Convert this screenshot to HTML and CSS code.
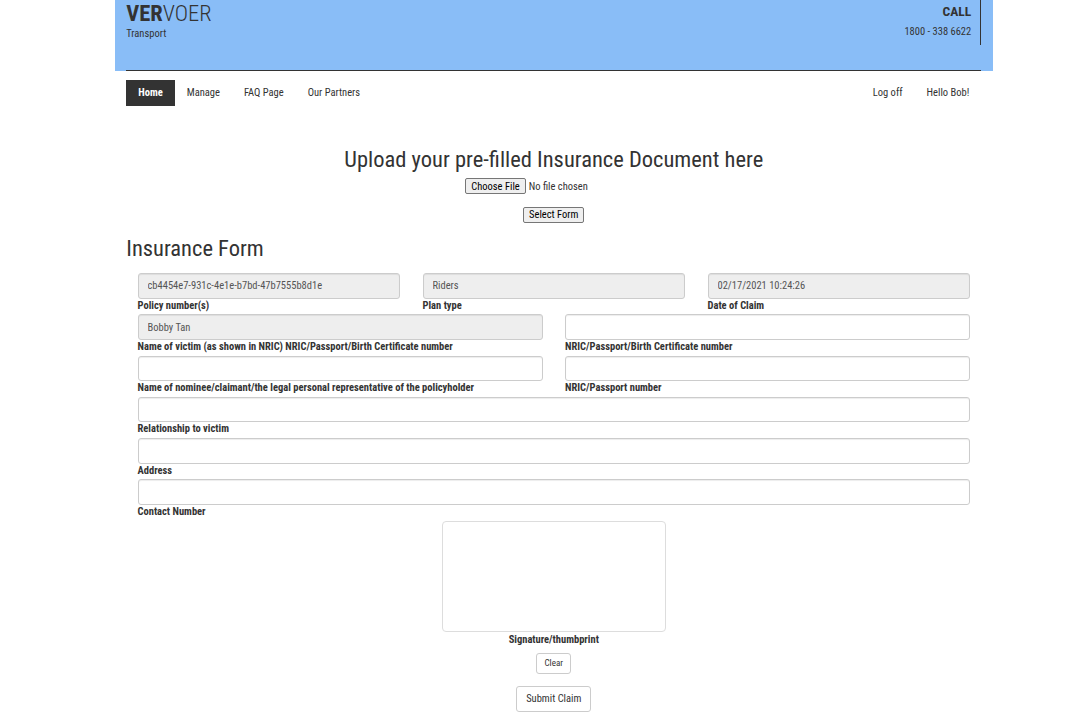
FILE: index.html
```html
<!DOCTYPE html>
<html lang="en">
<head>
<meta charset="utf-8">
<title>VERVOER Transport - Insurance Form</title>
<link rel="stylesheet" href="styles.css">
</head>
<body>
<div class="page">
  <header class="topbar">
    <div class="topbar-inner">
      <div class="brand">
        <div class="brand-name"><span class="brand-bold">VER</span><span class="brand-light">VOER</span></div>
        <div class="brand-sub">Transport</div>
      </div>
      <div class="call">
        <div class="call-title">CALL</div>
        <div class="call-number">1800 - 338 6622</div>
      </div>
    </div>
  </header>

  <nav class="nav">
    <ul class="nav-list">
      <li><a class="nav-link active" href="#">Home</a></li>
      <li><a class="nav-link" href="#">Manage</a></li>
      <li><a class="nav-link" href="#">FAQ Page</a></li>
      <li><a class="nav-link" href="#">Our Partners</a></li>
    </ul>
    <ul class="nav-list">
      <li><a class="nav-link" href="#">Log off</a></li>
      <li><a class="nav-link" href="#">Hello Bob!</a></li>
    </ul>
  </nav>

  <main class="content">
    <section class="upload">
      <h2 class="upload-title">Upload your pre-filled Insurance Document here</h2>
      <div class="upload-file"><input class="file-input" type="file"></div>
      <div class="upload-select"><button class="sys-btn" type="button">Select Form</button></div>
    </section>

    <section class="claim">
      <h2 class="claim-title">Insurance Form</h2>
      <div class="fields">
        <div class="row row-3">
          <div class="field">
            <input class="input readonly" type="text" value="cb4454e7-931c-4e1e-b7bd-47b7555b8d1e" readonly>
            <label class="label">Policy number(s)</label>
          </div>
          <div class="field">
            <input class="input readonly" type="text" value="Riders" readonly>
            <label class="label">Plan type</label>
          </div>
          <div class="field">
            <input class="input readonly" type="text" value="02/17/2021 10:24:26" readonly>
            <label class="label">Date of Claim</label>
          </div>
        </div>
        <div class="row row-2">
          <div class="field">
            <input class="input readonly" type="text" value="Bobby Tan" readonly>
            <label class="label">Name of victim (as shown in NRIC) NRIC/Passport/Birth Certificate number</label>
          </div>
          <div class="field">
            <input class="input" type="text">
            <label class="label">NRIC/Passport/Birth Certificate number</label>
          </div>
        </div>
        <div class="row row-2">
          <div class="field">
            <input class="input" type="text">
            <label class="label">Name of nominee/claimant/the legal personal representative of the policyholder</label>
          </div>
          <div class="field">
            <input class="input" type="text">
            <label class="label">NRIC/Passport number</label>
          </div>
        </div>
        <div class="row">
          <div class="field">
            <input class="input" type="text">
            <label class="label">Relationship to victim</label>
          </div>
        </div>
        <div class="row">
          <div class="field">
            <input class="input" type="text">
            <label class="label">Address</label>
          </div>
        </div>
        <div class="row">
          <div class="field">
            <input class="input" type="text">
            <label class="label">Contact Number</label>
          </div>
        </div>
      </div>

      <div class="signature">
        <div class="sig-pad"></div>
        <div class="sig-label">Signature/thumbprint</div>
        <button class="btn btn-xs" type="button">Clear</button>
        <button class="btn btn-submit" type="button">Submit Claim</button>
      </div>
    </section>
  </main>
</div>
</body>
</html>
```
FILE: styles.css
```css
* { box-sizing: border-box; }

body {
  margin: 0;
  background: #fff;
  color: #333;
  font-family: "Roboto Condensed", Roboto, "Liberation Sans", sans-serif;
  font-size: 10.5px;
}

.page {
  width: 877.5px;
  margin-left: 115px;
}

/* ---------- top bar ---------- */
.topbar {
  background: #89bdf7;
  height: 71px;
}

.topbar-inner {
  margin: 0 11.25px;
  height: 71px;
  border-bottom: 1px solid #333;
  display: flex;
  justify-content: space-between;
  align-items: flex-start;
}

.brand-name {
  font-size: 22.5px;
  line-height: 25px;
  padding-top: 1px;
  color: #333;
}
.brand-bold { font-weight: 700; }
.brand-light { font-weight: 300; }

.brand-sub {
  margin-top: 1px;
  line-height: 13px;
  font-size: 10.5px;
}

.call {
  height: 45px;
  border-right: 1px solid #333;
  padding: 3px 9px 0 0;
  text-align: right;
}
.call-title {
  font-size: 13.5px;
  font-weight: 700;
  line-height: 16px;
}
.call-number {
  margin-top: 6px;
  font-size: 10.5px;
  line-height: 13px;
}

/* ---------- nav ---------- */
.nav {
  margin: 9px 11.25px 0;
  height: 26px;
  display: flex;
  justify-content: space-between;
}
.nav-list {
  list-style: none;
  margin: 0;
  padding: 0;
  display: flex;
}
.nav-link {
  display: block;
  padding: 0 12px;
  line-height: 26px;
  color: #333;
  text-decoration: none;
}
.nav-link.active {
  background: #333;
  color: #fff;
  font-weight: 700;
}

/* ---------- upload ---------- */
.content {
  padding: 0 11.25px;
}
.upload {
  text-align: center;
}
.upload-title,
.claim-title {
  margin: 0;
  font-size: 22.5px;
  line-height: 25px;
  font-weight: 400;
  color: #333;
}
.upload-title {
  margin-top: 41px;
}
.upload-file {
  margin-top: 6px;
  height: 17px;
}
.file-input {
  font: 10.5px "Roboto Condensed", sans-serif;
  color: #333;
  width: 177px;
  height: 16px;
}
.file-input::file-selector-button {
  font: 10.5px "Roboto Condensed", sans-serif;
  color: #000;
  background: #efefef;
  border: 1px solid #767676;
  border-radius: 2px;
  padding: 0 5px;
  height: 16px;
  margin-right: 3px;
}
.upload-select {
  margin-top: 12px;
}
.sys-btn {
  font: 10.5px "Roboto Condensed", sans-serif;
  color: #000;
  background: #efefef;
  border: 1px solid #767676;
  border-radius: 2px;
  padding: 0 5px;
  height: 16px;
  line-height: 14px;
}

/* ---------- form ---------- */
.claim-title {
  margin-top: 13px;
}
.fields {
  margin-top: 12px;
  padding: 0 11.25px;
}
.row {
  display: grid;
  grid-template-columns: 1fr;
  column-gap: 22.5px;
  margin-bottom: 1.75px;
}
.row-3 { grid-template-columns: repeat(3, 1fr); }
.row-2 { grid-template-columns: repeat(2, 1fr); }

.field {
  display: flex;
  flex-direction: column;
}
.input {
  height: 25.5px;
  width: 100%;
  border: 1px solid #ccc;
  border-radius: 3px;
  padding: 0 9px;
  font: 10.5px "Roboto Condensed", sans-serif;
  color: #555;
  background: #fff;
  box-shadow: inset 0 1px 1px rgba(0,0,0,.075);
}
.input.readonly {
  background: #eee;
}
.label {
  font-weight: 700;
  line-height: 14px;
  color: #333;
}

/* ---------- signature ---------- */
.signature {
  margin-top: 0.5px;
  display: flex;
  flex-direction: column;
  align-items: center;
}
.sig-pad {
  width: 224px;
  height: 111px;
  border: 1px solid #ddd;
  border-radius: 4px;
  background: #fff;
}
.sig-label {
  margin-top: 1px;
  font-weight: 700;
  line-height: 14px;
}
.btn {
  font-family: "Roboto Condensed", sans-serif;
  color: #333;
  background: #fff;
  border: 1px solid #ccc;
  border-radius: 3px;
  cursor: pointer;
}
.btn-xs {
  margin-top: 6px;
  width: 35px;
  height: 21px;
  padding: 0;
  font-size: 9px;
}
.btn-submit {
  margin-top: 12px;
  width: 75px;
  height: 26px;
  padding: 0;
  font-size: 10.5px;
}
```
